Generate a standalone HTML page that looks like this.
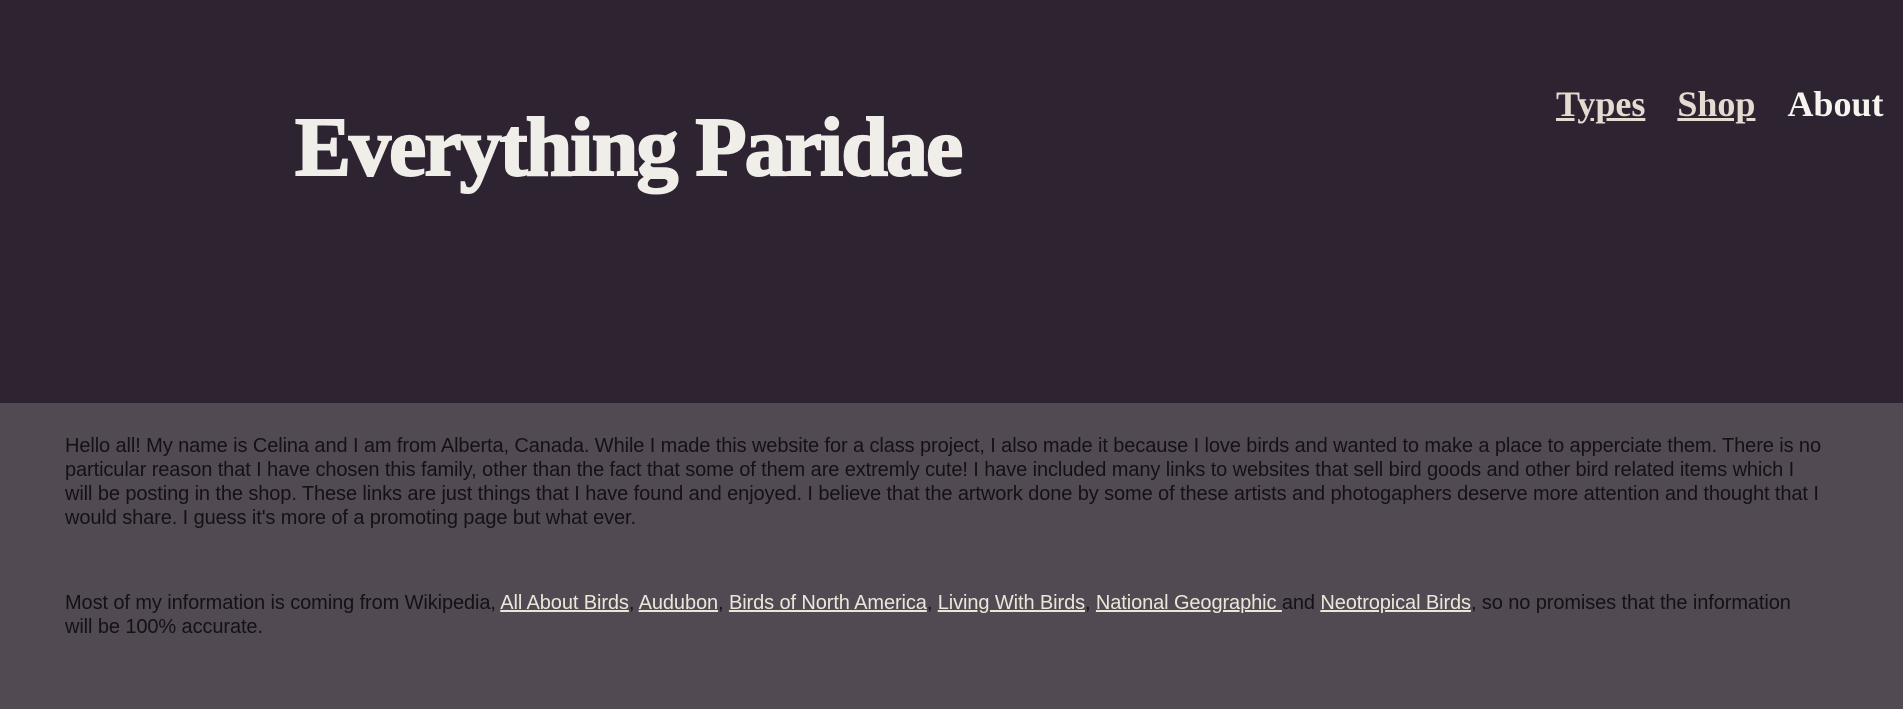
<!DOCTYPE html>
<html><head><meta charset="utf-8"><style>
html,body{margin:0;padding:0;width:1903px;height:709px;overflow:hidden;background:#514a53}
header{position:absolute;left:0;top:0;width:1903px;height:403px;background:#2d2331}
h1{position:absolute;left:295px;top:106px;margin:0;font:bold 84px/1 "Liberation Serif",serif;color:#f0eee9;letter-spacing:-2px;white-space:nowrap;-webkit-text-stroke:2px #f0eee9}
nav{position:absolute;top:86px;left:1556px;font:bold 36px/1 "Liberation Serif",serif;white-space:nowrap}
nav a{color:#e2ddd0;text-decoration:underline;margin-right:32px}
nav a.cur{color:#f6f4ef;text-decoration:none;margin-right:0}
.c{position:absolute;left:65px;font:20px/24px "Liberation Sans",sans-serif;color:#141016;white-space:nowrap;letter-spacing:-0.1px}
.c a{color:#ece6da;text-decoration:underline}
</style></head><body>
<header>
<h1>Everything Paridae</h1>
<nav><a>Types</a><a>Shop</a><a class="cur">About</a></nav>
</header>
<div class="c" style="top:434px">Hello all! My name is Celina and I am from Alberta, Canada. While I made this website for a class project, I also made it because I love birds and wanted to make a place to apperciate them. There is no<br>particular reason that I have chosen this family, other than the fact that some of them are extremly cute! I have included many links to websites that sell bird goods and other bird related items which I<br>will be posting in the shop. These links are just things that I have found and enjoyed. I believe that the artwork done by some of these artists and photogaphers deserve more attention and thought that I<br>would share. I guess it's more of a promoting page but what ever.</div>
<div class="c" style="top:591px">Most of my information is coming from Wikipedia, <a>All About Birds</a>, <a>Audubon</a>, <a>Birds of North America</a>, <a>Living With Birds</a>, <a>National Geographic </a>and <a>Neotropical Birds</a>, so no promises that the information<br>will be 100% accurate.</div>
</body></html>
